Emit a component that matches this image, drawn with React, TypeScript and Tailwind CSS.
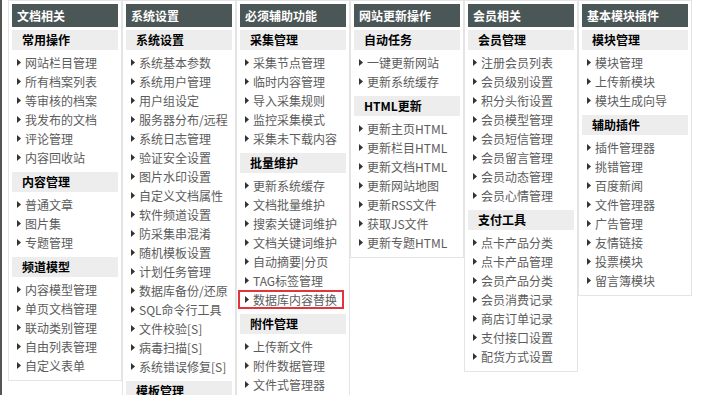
import React from "react";

type Group = { title: string; items: string[] };
type Column = { title: string; groups: Group[] };

const HIGHLIGHT = "数据库内容替换";

const columns: Column[] = [
  {
    title: "文档相关",
    groups: [
      { title: "常用操作", items: ["网站栏目管理", "所有档案列表", "等审核的档案", "我发布的文档", "评论管理", "内容回收站"] },
      { title: "内容管理", items: ["普通文章", "图片集", "专题管理"] },
      { title: "频道模型", items: ["内容模型管理", "单页文档管理", "联动类别管理", "自由列表管理", "自定义表单"] },
    ],
  },
  {
    title: "系统设置",
    groups: [
      {
        title: "系统设置",
        items: [
          "系统基本参数", "系统用户管理", "用户组设定", "服务器分布/远程", "系统日志管理", "验证安全设置",
          "图片水印设置", "自定义文档属性", "软件频道设置", "防采集串混淆", "随机模板设置", "计划任务管理",
          "数据库备份/还原", "SQL命令行工具", "文件校验[S]", "病毒扫描[S]", "系统错误修复[S]",
        ],
      },
      { title: "模板管理", items: ["默认模板管理", "标签源码管理"] },
    ],
  },
  {
    title: "必须辅助功能",
    groups: [
      { title: "采集管理", items: ["采集节点管理", "临时内容管理", "导入采集规则", "监控采集模式", "采集未下载内容"] },
      { title: "批量维护", items: ["更新系统缓存", "文档批量维护", "搜索关键词维护", "文档关键词维护", "自动摘要|分页", "TAG标签管理", "数据库内容替换"] },
      { title: "附件管理", items: ["上传新文件", "附件数据管理", "文件式管理器"] },
    ],
  },
  {
    title: "网站更新操作",
    groups: [
      { title: "自动任务", items: ["一键更新网站", "更新系统缓存"] },
      { title: "HTML更新", items: ["更新主页HTML", "更新栏目HTML", "更新文档HTML", "更新网站地图", "更新RSS文件", "获取JS文件", "更新专题HTML"] },
    ],
  },
  {
    title: "会员相关",
    groups: [
      { title: "会员管理", items: ["注册会员列表", "会员级别设置", "积分头衔设置", "会员模型管理", "会员短信管理", "会员留言管理", "会员动态管理", "会员心情管理"] },
      { title: "支付工具", items: ["点卡产品分类", "点卡产品管理", "会员产品分类", "会员消费记录", "商店订单记录", "支付接口设置", "配货方式设置"] },
    ],
  },
  {
    title: "基本模块插件",
    groups: [
      { title: "模块管理", items: ["模块管理", "上传新模块", "模块生成向导"] },
      { title: "辅助插件", items: ["插件管理器", "挑错管理", "百度新闻", "文件管理器", "广告管理", "友情链接", "投票模块", "留言簿模块"] },
    ],
  },
];

function Arrow() {
  return (
    <svg width="4" height="7" viewBox="0 0 4 7" className="mr-[4px] shrink-0">
      <path d="M0 0 L4 3.5 L0 7 Z" fill="#333" />
    </svg>
  );
}

export default function App() {
  return (
    <div
      className="flex h-[395px] w-[701px] overflow-hidden bg-white"
      style={{ fontFamily: '"Noto Sans CJK SC", "Noto Sans", sans-serif' }}
    >
      <div className="w-[2px] shrink-0 bg-[#555]" />
      <div className="flex items-start pl-[6px]">
        {columns.map((col) => (
          <div key={col.title} className="w-[114px] shrink-0 border border-[#e4e4e4] px-[3px] pt-[3px]">
            <div className="mb-[3px] flex h-[23px] items-center bg-[#4b5656] pl-[5px] text-[12px] font-bold text-white">
              {col.title}
            </div>
            {col.groups.map((g) => (
              <div key={g.title}>
                <div className="flex h-[20px] items-center bg-[#ededed] pl-[10px] text-[12px] font-bold text-black">
                  {g.title}
                </div>
                <ul className="pt-[3px] pb-[5px]">
                  {g.items.map((it) => (
                    <li key={it} className="relative flex h-[19px] items-center pl-[5px] text-[12px] text-[#5c5c5c] whitespace-nowrap">
                      <Arrow />
                      {it}
                      {it === HIGHLIGHT && (
                        <span className="absolute left-[-2px] top-0 h-[19px] w-[106px] border-2 border-[#e3343b]" />
                      )}
                    </li>
                  ))}
                </ul>
              </div>
            ))}
          </div>
        ))}
      </div>
    </div>
  );
}
